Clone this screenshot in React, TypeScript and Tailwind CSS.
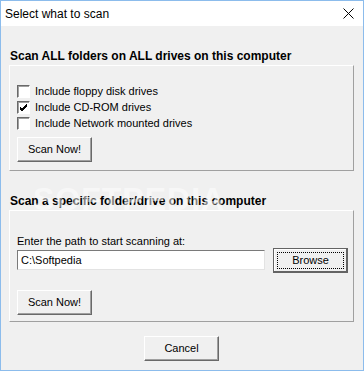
import { ReactNode } from 'react';

const font = { fontFamily: '"Liberation Sans", Arial, sans-serif' };

function WinButton({ children, isDefault }: { children: ReactNode; isDefault?: boolean }) {
  if (isDefault) {
    return (
      <button className="relative w-[75px] h-[25px] shrink-0 bg-[#f0f0f0] border border-[#646464] shadow-[inset_-1px_-1px_0_#646464,inset_1px_1px_0_#ffffff] text-[11px] text-black">
        <span className="absolute inset-[3px] border border-dotted border-black" />
        {children}
      </button>
    );
  }
  return (
    <button className="w-[75px] h-[25px] shrink-0 bg-[#f0f0f0] border border-t-white border-l-white border-r-[#696969] border-b-[#696969] shadow-[inset_-1px_-1px_0_#a0a0a0] text-[11px] text-black">
      {children}
    </button>
  );
}

function CheckRow({ label, checked }: { label: string; checked?: boolean }) {
  return (
    <div className="flex items-center h-[16px] gap-[5px]">
      <span className="w-[13px] h-[13px] bg-white border border-t-[#696969] border-l-[#696969] border-r-white border-b-white shadow-[inset_1px_1px_0_#a0a0a0] flex items-center justify-center">
        {checked && (
          <svg width="9" height="9" viewBox="0 0 9 9">
            <path d="M1 4 L3 6 L8 1 M1 5 L3 7 L8 2 M1 6 L3 8 L8 3" stroke="black" strokeWidth="1" fill="none" />
          </svg>
        )}
      </span>
      <span className="text-[11px] leading-[14px] text-black">{label}</span>
    </div>
  );
}

export default function App() {
  return (
    <div
      style={font}
      className="relative w-[364px] h-[371px] border border-[#8cbcec] bg-[#f0f0f0] flex flex-col overflow-hidden"
    >
      <div className="h-[25px] bg-white flex items-center justify-between pl-[4px] pr-[9px]">
        <span className="text-[12px] text-black">Select what to scan</span>
        <svg width="11" height="11" viewBox="0 0 11 11">
          <path d="M0.5 0.5 L10.5 10.5 M10.5 0.5 L0.5 10.5" stroke="black" strokeWidth="1" />
        </svg>
      </div>

      <div className="flex flex-col pl-[8px] pr-[9px]">
        <div className="mt-[23px] pl-[1px] text-[12px] leading-[14px] font-bold text-black">
          Scan ALL folders on ALL drives on this computer
        </div>
        <div className="mt-[2px] border border-t-white border-l-white border-r-[#a0a0a0] border-b-[#a0a0a0] pl-[7px] pt-[17px] pb-[8px] flex flex-col">
          <CheckRow label="Include floppy disk drives" />
          <CheckRow label="Include CD-ROM drives" checked />
          <CheckRow label="Include Network mounted drives" />
          <div className="mt-[5px]">
            <WinButton>Scan Now!</WinButton>
          </div>
        </div>

        <div className="mt-[23px] pl-[1px] text-[12px] leading-[14px] font-bold text-black">
          Scan a specific folder/drive on this computer
        </div>
        <div className="mt-[2px] border border-t-white border-l-white border-r-[#a0a0a0] border-b-[#a0a0a0] pl-[7px] pr-[4px] pt-[23px] pb-[6px] flex flex-col">
          <div className="text-[11px] leading-[14px] text-black">Enter the path to start scanning at:</div>
          <div className="flex items-center h-[25px] gap-[8px]">
            <div className="w-[248px] h-[20px] bg-white border border-t-[#7a7a7a] border-l-[#7a7a7a] border-r-[#e3e3e3] border-b-[#e3e3e3] flex items-center pl-[3px] text-[11px] text-black">
              C:\Softpedia
            </div>
            <WinButton isDefault>Browse</WinButton>
          </div>
          <div className="mt-[16px]">
            <WinButton>Scan Now!</WinButton>
          </div>
        </div>

        <div className="mt-[14px] flex justify-center">
          <WinButton>Cancel</WinButton>
        </div>
      </div>

      <div className="absolute left-[32px] top-[174px] text-[32px] font-bold tracking-[1px] text-white opacity-50 pointer-events-none select-none">
        SOFTPEDIA
      </div>
    </div>
  );
}
